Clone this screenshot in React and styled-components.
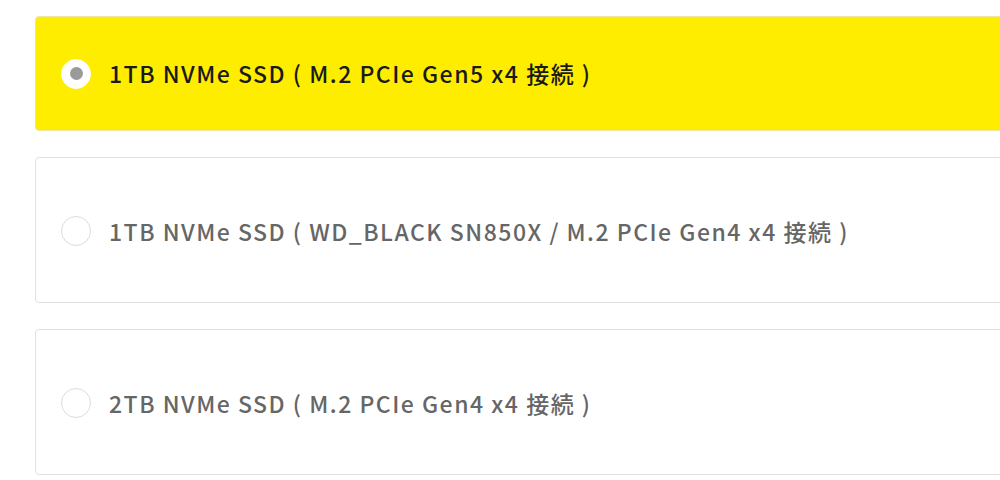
import styled, { createGlobalStyle } from 'styled-components'

const GlobalStyle = createGlobalStyle`
  html, body {
    margin: 0;
    padding: 0;
    background: #fff;
    overflow: hidden;
  }
  body {
    font-family: 'Noto Sans CJK JP', 'Noto Sans', sans-serif;
  }
`

const List = styled.div`
  display: flex;
  flex-direction: column;
  gap: 26px;
  padding: 16px 0 0 35px;
  width: 1000px;
`

const Option = styled.label`
  display: flex;
  align-items: center;
  gap: 18px;
  height: ${p => p.$height}px;
  box-sizing: border-box;
  padding: ${p => p.$selected ? '0 0 0 25px' : '2px 0 0 25px'};
  background: ${p => p.$selected ? '#ffed00' : '#fff'};
  border: 1px solid ${p => p.$selected ? '#ece6a0' : '#e2e2e2'};
  border-radius: 4px;
  cursor: pointer;
`

const Radio = styled.span`
  flex: none;
  width: 30px;
  height: 30px;
  box-sizing: border-box;
  border-radius: 50%;
  background: #fff;
  border: 1px solid ${p => p.$checked ? '#fff' : '#dcdcdc'};
  display: flex;
  align-items: center;
  justify-content: center;

  &::after {
    content: '';
    display: ${p => p.$checked ? 'block' : 'none'};
    width: 13px;
    height: 13px;
    border-radius: 50%;
    background: #9a9a9a;
  }
`

const Label = styled.span`
  font-size: 23px;
  font-weight: 500;
  letter-spacing: 1.5px;
  line-height: 1;
  color: ${p => p.$selected ? '#1a1a1a' : '#666'};
  white-space: nowrap;
`

const options = [
  { id: 'a', label: '1TB NVMe SSD ( M.2 PCIe Gen5 x4 接続 )', height: 115 },
  { id: 'b', label: '1TB NVMe SSD ( WD_BLACK SN850X / M.2 PCIe Gen4 x4 接続 )', height: 146 },
  { id: 'c', label: '2TB NVMe SSD ( M.2 PCIe Gen4 x4 接続 )', height: 146 },
]

const App = () => {
  const selected = 'a'

  return (
    <>
      <GlobalStyle />
      <List>
        {options.map(opt => (
          <Option key={opt.id} $selected={opt.id === selected} $height={opt.height}>
            <Radio $checked={opt.id === selected} />
            <Label $selected={opt.id === selected}>{opt.label}</Label>
          </Option>
        ))}
      </List>
    </>
  )
}

export default App
